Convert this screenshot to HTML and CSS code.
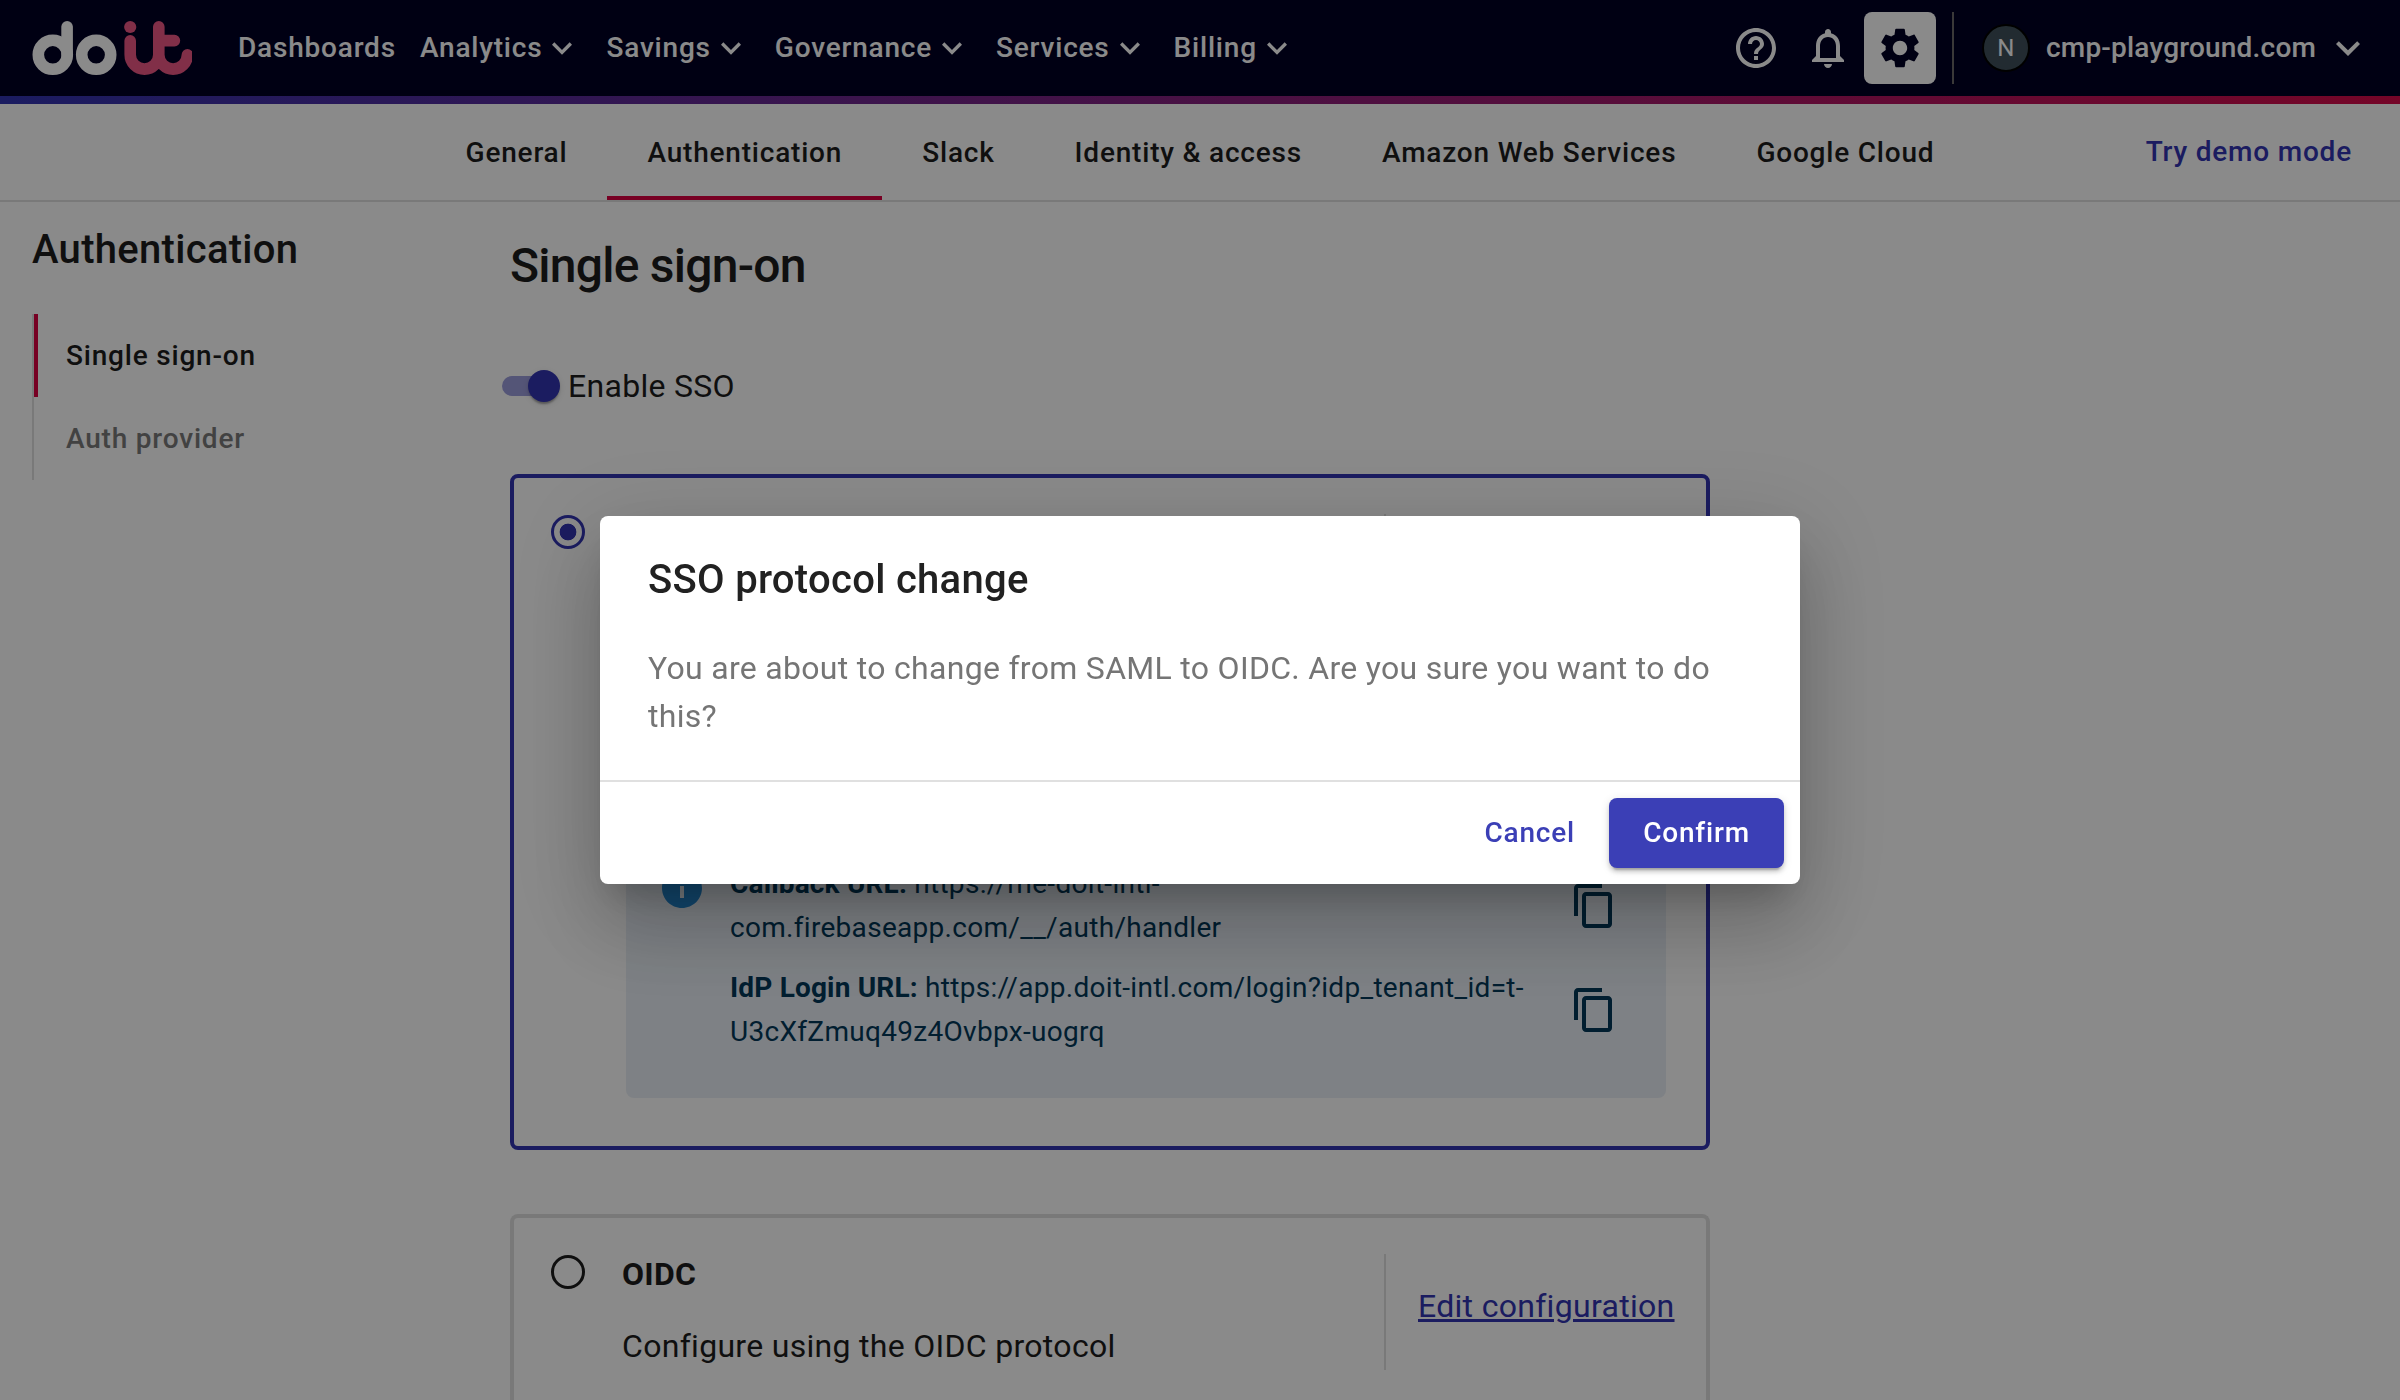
FILE: index.html
```html
<!DOCTYPE html>
<html lang="en">
<head>
<meta charset="utf-8">
<title>Single sign-on</title>
<link rel="stylesheet" href="styles.css">
</head>
<body>
<svg class="defs" width="0" height="0" aria-hidden="true">
  <symbol id="chevron" viewBox="0 0 24 24"><path d="M7.41 8.59 12 13.17l4.59-4.58L18 10l-6 6-6-6z"/></symbol>
  <symbol id="copy" viewBox="0 0 24 24"><path d="M16 1H4c-1.1 0-2 .9-2 2v14h2V3h12V1zm3 4H8c-1.1 0-2 .9-2 2v14c0 1.1.9 2 2 2h11c1.1 0 2-.9 2-2V7c0-1.1-.9-2-2-2zm0 16H8V7h11v14z"/></symbol>
</svg>

<header class="topbar">
  <svg class="logo" viewBox="32 16 160 64" fill="none" stroke-linecap="round" stroke-linejoin="round">
    <g stroke="#fff" stroke-width="11.6">
      <circle cx="52.8" cy="54.8" r="14.5"/>
      <path d="M67.1 26.8V54.8"/>
      <circle cx="96.2" cy="54.8" r="14.5"/>
    </g>
    <circle cx="130.2" cy="27" r="6.1" fill="#ef5785"/>
    <path stroke="#ef5785" stroke-width="11.6" d="M130.2 40.8V54.8a14.3 14.3 0 0 0 28.6 0V26.8M158.8 40.6H174.4M158.8 54.8a14.3 14.3 0 0 0 28.6 0"/>
  </svg>
  <nav class="nav">
    <a class="nav-item">Dashboards</a>
    <a class="nav-item">Analytics<svg><use href="#chevron"/></svg></a>
    <a class="nav-item">Savings<svg><use href="#chevron"/></svg></a>
    <a class="nav-item">Governance<svg><use href="#chevron"/></svg></a>
    <a class="nav-item">Services<svg><use href="#chevron"/></svg></a>
    <a class="nav-item">Billing<svg><use href="#chevron"/></svg></a>
  </nav>
  <div class="tools">
    <span class="tool"><svg viewBox="0 0 24 24"><path d="M11 18h2v-2h-2v2zm1-16C6.48 2 2 6.48 2 12s4.48 10 10 10 10-4.48 10-10S17.52 2 12 2zm0 18c-4.41 0-8-3.59-8-8s3.59-8 8-8 8 3.59 8 8-3.59 8-8 8zm0-14c-2.21 0-4 1.79-4 4h2c0-1.1.9-2 2-2s2 .9 2 2c0 2-3 1.75-3 5h2c0-2.25 3-2.5 3-5 0-2.21-1.79-4-4-4z"/></svg></span>
    <span class="tool"><svg viewBox="0 0 24 24"><path d="M12 22c1.1 0 2-.9 2-2h-4c0 1.1.9 2 2 2zm6-6v-5c0-3.07-1.63-5.64-4.5-6.32V4c0-.83-.67-1.5-1.5-1.5s-1.5.67-1.5 1.5v.68C7.64 5.36 6 7.92 6 11v5l-2 2v1h16v-1l-2-2zm-2 1H8v-6c0-2.48 1.51-4.5 4-4.5s4 2.02 4 4.5v6z"/></svg></span>
    <span class="tool tool-active"><svg viewBox="0 0 24 24"><path d="M19.14 12.94c.04-.3.06-.61.06-.94 0-.32-.02-.64-.07-.94l2.03-1.58c.18-.14.23-.41.12-.61l-1.92-3.32c-.12-.22-.37-.29-.59-.22l-2.39.96c-.5-.38-1.03-.7-1.62-.94l-.36-2.54c-.04-.24-.24-.41-.48-.41h-3.84c-.24 0-.43.17-.47.41l-.36 2.54c-.59.24-1.13.57-1.62.94l-2.39-.96c-.22-.08-.47 0-.59.22L2.74 8.87c-.12.21-.08.47.12.61l2.03 1.58c-.05.3-.09.63-.09.94s.02.64.07.94l-2.03 1.58c-.18.14-.23.41-.12.61l1.92 3.32c.12.22.37.29.59.22l2.39-.96c.5.38 1.03.7 1.62.94l.36 2.54c.05.24.24.41.48.41h3.84c.24 0 .44-.17.47-.41l.36-2.54c.59-.24 1.13-.56 1.62-.94l2.39.96c.22.08.47 0 .59-.22l1.92-3.32c.12-.22.07-.47-.12-.61l-2.01-1.58zM12 15.6c-1.98 0-3.6-1.62-3.6-3.6s1.62-3.6 3.6-3.6 3.6 1.62 3.6 3.6-1.62 3.6-3.6 3.6z"/></svg></span>
  </div>
  <div class="account">
    <span class="avatar">N</span>
    <span class="domain">cmp-playground.com</span>
    <svg><use href="#chevron"/></svg>
  </div>
</header>
<div class="rainbow"></div>

<div class="tabbar">
  <nav class="tabs">
    <a class="tab">General</a>
    <a class="tab tab-active">Authentication</a>
    <a class="tab">Slack</a>
    <a class="tab">Identity &amp; access</a>
    <a class="tab">Amazon Web Services</a>
    <a class="tab">Google Cloud</a>
  </nav>
  <a class="demo">Try demo mode</a>
</div>

<div class="page">
  <aside class="sidebar">
    <h2>Authentication</h2>
    <ul>
      <li class="current">Single sign-on</li>
      <li>Auth provider</li>
    </ul>
  </aside>
  <main class="main">
    <h1>Single sign-on</h1>
    <label class="switch-row"><span class="switch"><span class="thumb"></span></span>Enable SSO</label>

    <section class="card card-selected">
      <div class="card-head">
        <span class="radio radio-on"></span>
        <div class="card-text"></div>
        <div class="card-action"></div>
      </div>
      <div class="alert">
        <svg class="info" viewBox="0 0 24 24"><path d="M12 2C6.48 2 2 6.48 2 12s4.48 10 10 10 10-4.48 10-10S17.52 2 12 2zm1 15h-2v-6h2v6zm0-8h-2V7h2v2z"/></svg>
        <div class="urls">
          <div class="url"><p><b>Callback URL:</b> https://me-doit-intl-<br>com.firebaseapp.com/__/auth/handler</p><svg><use href="#copy"/></svg></div>
          <div class="url"><p><b>IdP Login URL:</b> https://app.doit-intl.com/login?idp_tenant_id=t-<br>U3cXfZmuq49z4Ovbpx-uogrq</p><svg><use href="#copy"/></svg></div>
        </div>
      </div>
    </section>

    <section class="card card-last">
      <div class="card-head">
        <span class="radio"></span>
        <div class="card-text"><h3>OIDC</h3><p>Configure using the OIDC protocol</p></div>
        <div class="card-action"><a>Edit configuration</a></div>
      </div>
    </section>
  </main>
</div>

<div class="backdrop">
  <div class="dialog" role="dialog">
    <div class="dialog-body">
      <h2>SSO protocol change</h2>
      <p>You are about to change from SAML to OIDC. Are you sure you want to do this?</p>
    </div>
    <div class="dialog-actions">
      <button class="btn">Cancel</button>
      <button class="btn btn-primary">Confirm</button>
    </div>
  </div>
</div>
</body>
</html>
```
FILE: styles.css
```css
* { box-sizing: border-box; margin: 0; padding: 0; }

body {
  width: 2400px;
  height: 1400px;
  overflow: hidden;
  background: #fff;
  color: #1d1d1d;
  font: 400 32px/48px Roboto, sans-serif;
  letter-spacing: 0.00938em;
}
.defs { position: absolute; }
svg { fill: currentColor; flex: none; }

/* top bar */
.topbar {
  display: flex;
  align-items: center;
  height: 96px;
  padding-left: 32px;
  background: #000024;
  color: #fff;
  font-size: 28px;
  font-weight: 500;
}
.logo { width: 160px; height: 64px; fill: none; }
.nav { display: flex; gap: 24px; margin-left: 46px; letter-spacing: 0.02857em; }
.nav-item { display: flex; align-items: center; }
.nav-item svg { width: 40px; height: 40px; }
.tools { display: flex; margin-left: auto; }
.tool {
  display: flex;
  align-items: center;
  justify-content: center;
  width: 72px;
  height: 72px;
  border-radius: 8px;
}
.tool svg { width: 48px; height: 48px; }
.tool-active { background: #fff; color: #000024; }
.account {
  display: flex;
  align-items: center;
  width: 448px;
  height: 72px;
  margin-left: 16px;
  padding-left: 28px;
  border-left: 2px solid #6c6a6a;
}
.account svg { width: 48px; height: 48px; margin-left: 8px; }
.avatar {
  display: flex;
  align-items: center;
  justify-content: center;
  width: 48px;
  height: 48px;
  border: 2px solid #000;
  border-radius: 50%;
  background: #3f515b;
  font-size: 24px;
  font-weight: 400;
}
.domain { margin-left: 16px; letter-spacing: 0.00714em; }
.rainbow { height: 8px; background: linear-gradient(90deg, #3234b2, #d80b4a); }

/* tabs */
.tabbar {
  display: grid;
  grid-template-columns: 1fr auto 1fr;
  height: 98px;
  border-bottom: 2px solid #e0e0e0;
  font-size: 28px;
  font-weight: 500;
  letter-spacing: 0.02857em;
}
.tabs { grid-column: 2; display: flex; }
.tab { display: flex; align-items: center; padding: 6px 40px 0; border-bottom: 4px solid transparent; }
.tab-active { border-color: #dc0041; }
.demo { justify-self: end; align-self: center; padding: 0 48px 0 0; color: #3234b2; }

/* page */
.page { display: flex; }
.sidebar { width: 510px; padding: 16px 0 0 32px; }
.sidebar h2 { font-size: 40px; font-weight: 500; line-height: 64px; letter-spacing: 0.0075em; }
.sidebar ul {
  width: 300px;
  margin-top: 32px;
  border-left: 2px solid #e0e0e0;
  list-style: none;
  font-size: 28px;
  font-weight: 500;
  letter-spacing: 0.02857em;
}
.sidebar li { height: 83px; padding-left: 32px; line-height: 83px; color: #7a7a7a; }
.sidebar .current { padding-left: 28px; border-left: 4px solid #dc0041; color: #1d1d1d; }

.main { width: 1200px; padding-top: 32px; }
.main h1 { font-size: 48px; font-weight: 500; line-height: 64px; letter-spacing: -0.0156em; }
.switch-row { display: flex; align-items: center; margin: 64px 0 0 -8px; }
.switch {
  display: flex;
  align-items: center;
  justify-content: flex-end;
  width: 52px;
  height: 20px;
  margin-right: 14px;
  border-radius: 10px;
  background: #9c9ddc;
}
.thumb {
  flex: none;
  width: 32px;
  height: 32px;
  margin-right: -6px;
  border-radius: 50%;
  background: #3234b2;
  box-shadow: 0 4px 2px -2px rgba(0, 0, 0, .2), 0 2px 2px rgba(0, 0, 0, .14), 0 2px 6px rgba(0, 0, 0, .12);
}

/* provider cards */
.card {
  height: 676px;
  margin-top: 64px;
  padding: 36px 0 0 34px;
  border: 4px solid #e0e0e0;
  border-radius: 8px;
}
.card-selected { border-color: #3234b2; }
.card-last { height: 186px; border-bottom: 0; border-radius: 8px 8px 0 0; }
.card-head { display: flex; height: 116px; }
.radio {
  width: 34px;
  height: 34px;
  margin: 1px 37px 0 3px;
  border: 3.4px solid #1d1d1d;
  border-radius: 50%;
}
.radio-on { border-color: #3234b2; background: radial-gradient(circle, #3234b2 8px, transparent 8.7px); }
.card-text { flex: 1; margin-top: -4px; }
.card-text h3 { font-size: 32px; font-weight: 700; line-height: 48px; }
.card-text p { margin-top: 24px; }
.card-action {
  display: flex;
  align-items: center;
  width: 322px;
  padding: 0 0 12px 32px;
  border-left: 2px solid #e0e0e0;
  color: #3234b2;
}
.card-action a { text-decoration: underline; text-decoration-thickness: 3px; }

.alert {
  display: flex;
  width: 1040px;
  margin: 188px 0 0 78px;
  padding: 44px 48px 44px 32px;
  border-radius: 8px;
  background: #e9eff6;
  color: #023859;
  font-size: 28px;
  line-height: 44px;
  letter-spacing: 0.01071em;
}
.alert b { letter-spacing: 0.006em; }
.info { width: 48px; height: 48px; margin: 2px 24px 0 0; color: #2288d2; }
.urls { display: flex; flex: 1; flex-direction: column; gap: 16px; }
.url { display: flex; align-items: center; justify-content: space-between; }
.url svg { width: 48px; height: 48px; }

/* dialog */
.backdrop {
  position: fixed;
  inset: 0;
  display: flex;
  align-items: center;
  justify-content: center;
  background: rgba(0, 0, 0, .46);
}
.dialog {
  width: 1200px;
  height: 368px;
  border-radius: 8px;
  background: #fff;
  box-shadow: 0 22px 30px -14px rgba(0, 0, 0, .2), 0 48px 76px 6px rgba(0, 0, 0, .14), 0 18px 92px 16px rgba(0, 0, 0, .12);
}
.dialog-body { height: 264px; padding: 32px 48px 0; }
.dialog-body h2 { font-size: 40px; font-weight: 500; line-height: 64px; letter-spacing: 0.0075em; color: #212121; }
.dialog-body p { margin-top: 32px; color: #757575; }
.dialog-actions {
  display: flex;
  justify-content: flex-end;
  padding: 16px;
  border-top: 2px solid #e0e0e0;
}
.btn {
  height: 70px;
  padding: 0 34px 0 36px;
  border: 0;
  border-radius: 8px;
  background: none;
  color: #3b3fb6;
  font: 500 28px/48px Roboto, sans-serif;
  letter-spacing: 0.02857em;
}
.btn-primary {
  width: 175px;
  padding: 0;
  background: #3b3fb6;
  color: #fff;
  box-shadow: 0 6px 2px -4px rgba(0, 0, 0, .2), 0 4px 4px rgba(0, 0, 0, .14), 0 2px 10px rgba(0, 0, 0, .12);
}
```
